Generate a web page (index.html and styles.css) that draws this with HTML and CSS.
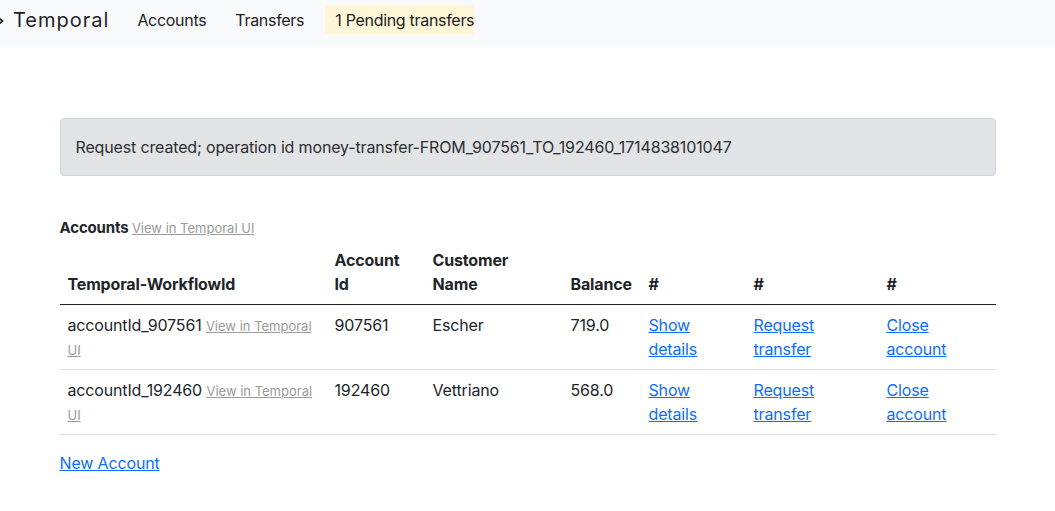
FILE: index.html
```html
<!DOCTYPE html>
<html>
<head>
<meta charset="utf-8">
<link rel="stylesheet" href="styles.css">
</head>
<body>
<nav class="navbar">
  <a class="brand" href="#"><svg class="chev" width="5" height="8" viewBox="0 0 5 8"><path d="M0 1 L3.5 4 L0 7" fill="none" stroke="#212529" stroke-width="1.8"/></svg><span>Temporal</span></a>
  <ul class="nav">
    <li><a class="nav-link" href="#">Accounts</a></li>
    <li><a class="nav-link" href="#">Transfers</a></li>
    <li><a class="nav-link pending" href="#">1 Pending transfers</a></li>
  </ul>
</nav>
<main class="container">
  <div class="alert">Request created; operation id money-transfer-FROM_907561_TO_192460_1714838101047</div>
  <h6 class="section-title">Accounts <a class="muted-link" href="#">View in Temporal UI</a></h6>
  <table class="table">
    <colgroup>
      <col class="c1"><col class="c2"><col class="c3"><col class="c4"><col class="c5"><col class="c6"><col class="c7">
    </colgroup>
    <thead>
      <tr>
        <th>Temporal-WorkflowId</th>
        <th>Account Id</th>
        <th>Customer Name</th>
        <th>Balance</th>
        <th>#</th>
        <th>#</th>
        <th>#</th>
      </tr>
    </thead>
    <tbody>
      <tr>
        <td>accountId_907561 <a class="muted-link" href="#">View in Temporal UI</a></td>
        <td>907561</td>
        <td>Escher</td>
        <td>719.0</td>
        <td><a href="#">Show details</a></td>
        <td><a href="#">Request transfer</a></td>
        <td><a href="#">Close account</a></td>
      </tr>
      <tr>
        <td>accountId_192460 <a class="muted-link" href="#">View in Temporal UI</a></td>
        <td>192460</td>
        <td>Vettriano</td>
        <td>568.0</td>
        <td><a href="#">Show details</a></td>
        <td><a href="#">Request transfer</a></td>
        <td><a href="#">Close account</a></td>
      </tr>
    </tbody>
  </table>
  <a class="new-account" href="#">New Account</a>
</main>
</body>
</html>
```
FILE: styles.css
```css
* { box-sizing: border-box; }
body {
  margin: 0;
  font-family: Inter, "Liberation Sans", sans-serif;
  font-size: 16px;
  line-height: 24px;
  letter-spacing: -0.15px;
  color: #212529;
  background: #fff;
}
a { color: #0d6efd; }
.navbar {
  height: 46px;
  background: #f8f9fa;
  display: flex;
  align-items: flex-start;
}
.brand {
  display: flex;
  align-items: center;
  height: 40px;
  margin-left: -1px;
  font-size: 20px;
  letter-spacing: 1px;
  color: #212529;
  text-decoration: none;
  margin-right: 18px;
}
.chev { margin-right: 9px; margin-top: 2px; }
.nav {
  list-style: none;
  margin: 0;
  padding: 0;
  display: flex;
  gap: 9px;
}
.nav-link {
  display: block;
  padding: 8px 10px;
  line-height: 24px;
  color: #1d1d1f;
  text-decoration: none;
  font-size: 16px;
  letter-spacing: -0.3px;
}
.pending {
  background: #fff6d7;
  height: 29px;
  margin-top: 5px;
  margin-left: 2px;
  padding: 3px 0 2px 10px;
}
.container {
  width: 936px;
  margin: 72px auto 0;
}
.alert {
  background: #e2e3e5;
  border: 1px solid #d3d6d8;
  border-radius: 4px;
  padding: 16px 15px;
  color: #2b2f32;
  margin-bottom: 40px;
}
.section-title {
  margin: 0;
  font-size: 15px;
  font-weight: 700;
  line-height: 24px;
}
.muted-link {
  color: #9a9a9a;
  font-size: 13px;
  font-weight: 400;
  line-height: 16px;
  letter-spacing: 0;
}
.table {
  width: 936px;
  border-collapse: collapse;
  table-layout: fixed;
  margin-bottom: 16px;
}
.c1 { width: 267px; }
.c2 { width: 98px; }
.c3 { width: 138px; }
.c4 { width: 78px; }
.c5 { width: 105px; }
.c6 { width: 133px; }
.c7 { width: 117px; }
th, td {
  text-align: left;
  padding: 8px;
  vertical-align: top;
}
th {
  vertical-align: bottom;
  font-weight: 700;
  border-bottom: 1px solid #212529;
}
tbody td { border-bottom: 1px solid #dee2e6; }
.new-account { display: inline-block; }
```
